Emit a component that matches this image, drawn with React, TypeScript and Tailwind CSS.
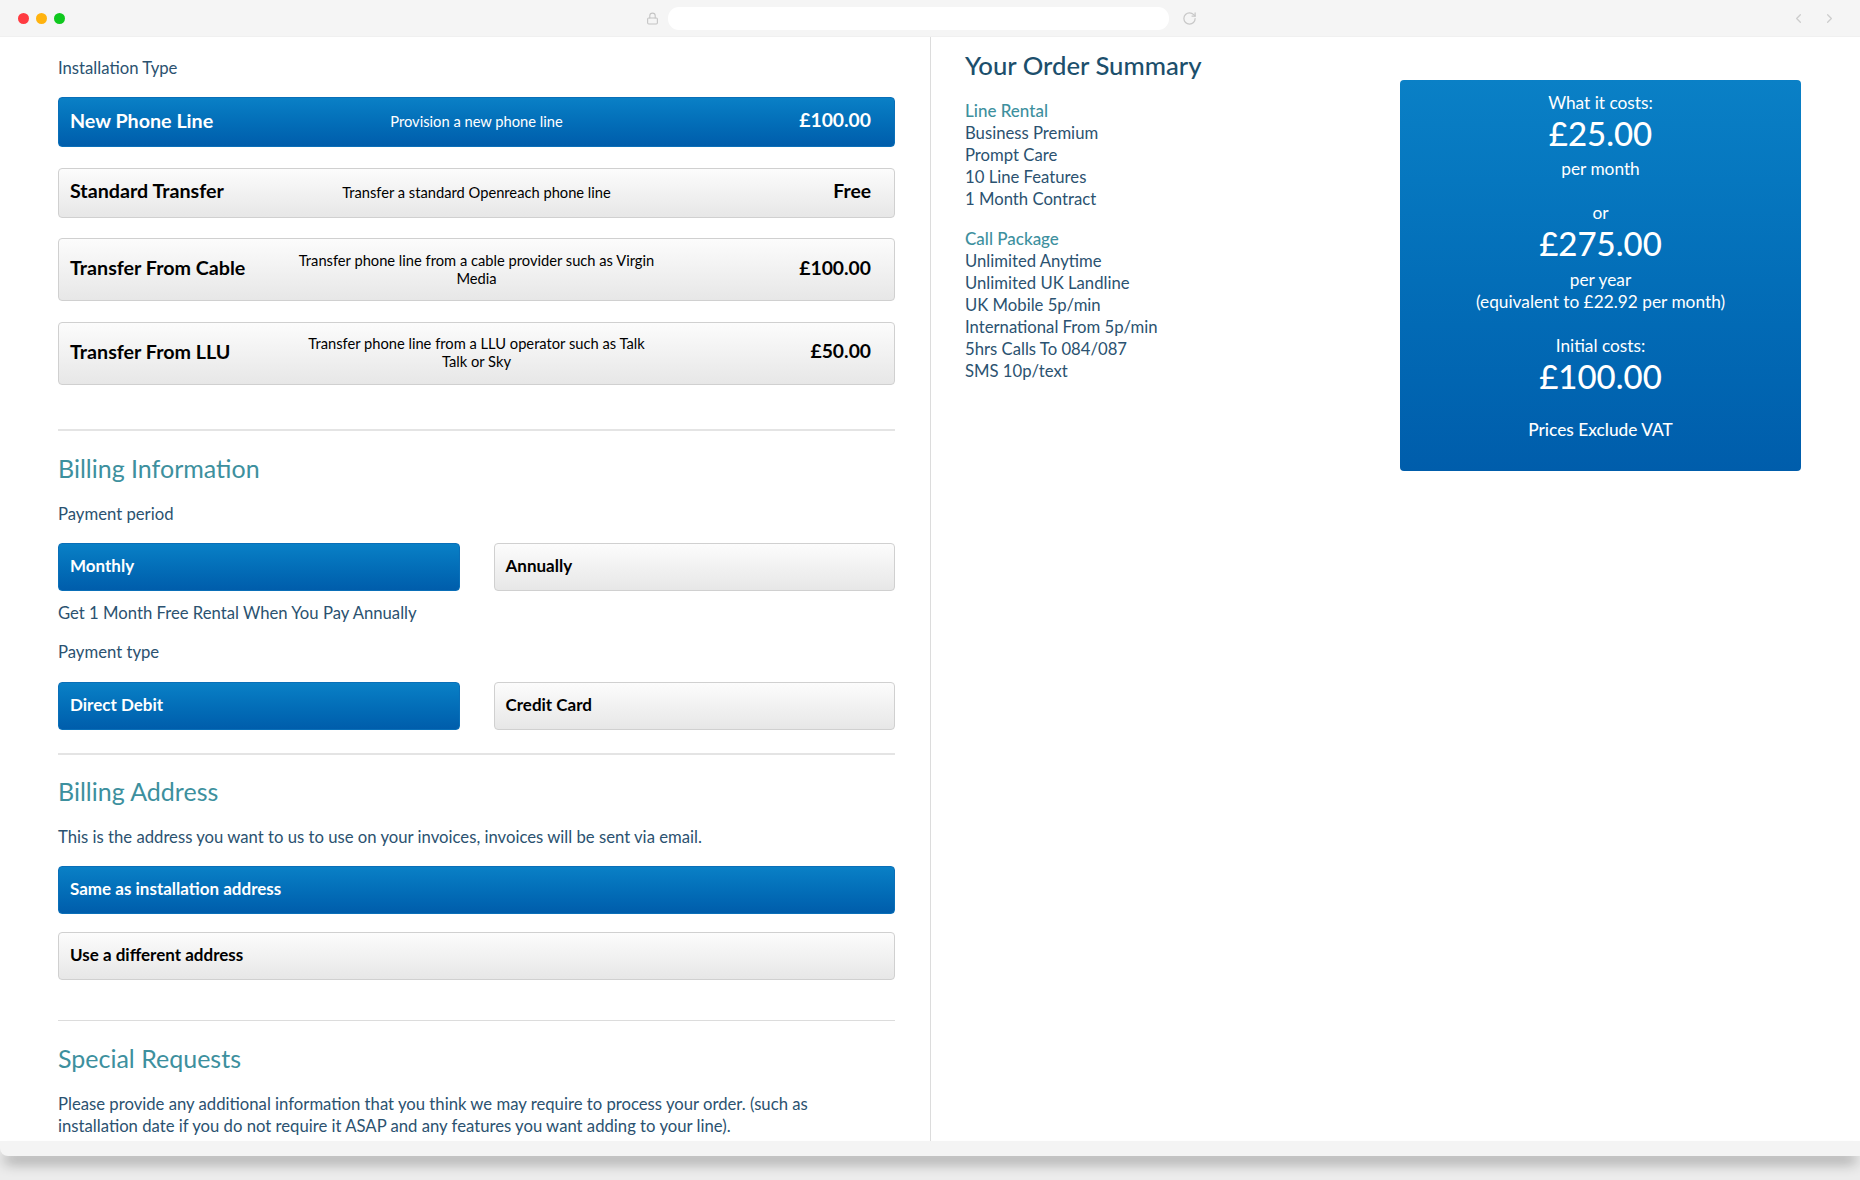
import { Lock, RotateCw, ChevronLeft, ChevronRight } from 'lucide-react';

const blue = 'bg-gradient-to-b from-[#0a80c6] to-[#005dab] text-white rounded-[4px] border border-[#0a6fb8]';
const grey = 'bg-gradient-to-b from-[#fcfcfc] to-[#e7e7e7] text-black rounded-[4px] border border-[#d0d0d0]';

const plans = [
  { name: 'New Phone Line', desc: ['Provision a new phone line'], price: '£100.00', active: true, h: 'h-[50px]' },
  { name: 'Standard Transfer', desc: ['Transfer a standard Openreach phone line'], price: 'Free', active: false, h: 'h-[50px]' },
  { name: 'Transfer From Cable', desc: ['Transfer phone line from a cable provider such as Virgin', 'Media'], price: '£100.00', active: false, h: 'h-[63px]' },
  { name: 'Transfer From LLU', desc: ['Transfer phone line from a LLU operator such as Talk', 'Talk or Sky'], price: '£50.00', active: false, h: 'h-[63px]' },
];

const lineRental = ['Business Premium', 'Prompt Care', '10 Line Features', '1 Month Contract'];
const callPackage = ['Unlimited Anytime', 'Unlimited UK Landline', 'UK Mobile 5p/min', 'International From 5p/min', '5hrs Calls To 084/087', 'SMS 10p/text'];

const Choice = ({ label, active }: { label: string; active?: boolean }) => (
  <div className={`h-[48px] flex items-center pl-[11px] pr-3 pb-[2px] text-[17px] font-bold ${active ? blue : grey}`}>{label}</div>
);

const Heading = ({ children, className }: { children: string; className: string }) => (
  <h2 className={`text-[25px] leading-[32px] text-[#3d909e] ${className}`}>{children}</h2>
);

const Text = ({ children, className = '' }: { children: string; className?: string }) => (
  <p className={`text-[16.7px] leading-[22px] text-[#2b5270] ${className}`}>{children}</p>
);

const Price = ({ children }: { children: string }) => (
  <div className="text-[33px] leading-[40px] font-medium">{children}</div>
);

export default function App() {
  return (
    <div className="w-[1860px] h-[1180px] overflow-hidden bg-[#ececec]" style={{ fontFamily: 'Lato, "Open Sans", sans-serif' }}>
      {/* Browser bar */}
      <div className="h-[37px] bg-[#f5f5f5] flex items-center relative border-b border-[#f0f0f0]">
        <div className="flex gap-[7px] ml-[18px]">
          <span className="w-[11px] h-[11px] rounded-full bg-[#ff3b41]" />
          <span className="w-[11px] h-[11px] rounded-full bg-[#ffb30f]" />
          <span className="w-[11px] h-[11px] rounded-full bg-[#0fc81e]" />
        </div>
        <Lock className="w-[13px] h-[13px] text-[#c4c4c4] ml-[581px]" />
        <div className="w-[501px] h-[23px] bg-white rounded-[11px] ml-[9px]" />
        <RotateCw className="w-[15px] h-[15px] text-[#c8c8c8] ml-[13px]" />
        <ChevronLeft className="w-[15px] h-[15px] text-[#cdcdcd] ml-[594px]" />
        <ChevronRight className="w-[15px] h-[15px] text-[#cdcdcd] ml-[16px]" />
      </div>

      {/* Page */}
      <div className="h-[1104px] bg-white flex overflow-hidden">
        <div className="w-[931px] shrink-0 border-r border-[#dcdcdc] pl-[58px] pr-[35px] pt-[20px]">
          <Text>Installation Type</Text>
          <div className="mt-[18px] flex flex-col gap-[20.5px]">
            {plans.map(p => (
              <div key={p.name} className={`${p.h} ${p.active ? blue : grey} flex items-center pl-[11px] pr-[23px] pb-[2px]`}>
                <div className="w-[190px] mb-[1px] text-[19.7px] font-bold whitespace-nowrap">{p.name}</div>
                <div className="flex-1 text-center text-[14.7px] leading-[18px]">
                  {p.desc.map(line => <div key={line}>{line}</div>)}
                </div>
                <div className="w-[178px] mb-[1px] text-right text-[19.3px] font-bold">{p.price}</div>
              </div>
            ))}
          </div>

          <hr className="mt-[44px] border-0 h-[2px] bg-[#e4e4e4]" />
          <Heading className="mt-[21px]">Billing Information</Heading>
          <Text className="mt-[19px]">Payment period</Text>
          <div className="mt-[18px] grid grid-cols-2 gap-[34px]">
            <Choice label="Monthly" active />
            <Choice label="Annually" />
          </div>
          <Text className="mt-[11px]">Get 1 Month Free Rental When You Pay Annually</Text>
          <Text className="mt-[17px]">Payment type</Text>
          <div className="mt-[19px] grid grid-cols-2 gap-[34px]">
            <Choice label="Direct Debit" active />
            <Choice label="Credit Card" />
          </div>

          <hr className="mt-[23px] border-0 h-[2px] bg-[#e4e4e4]" />
          <Heading className="mt-[20px]">Billing Address</Heading>
          <Text className="mt-[19px]">This is the address you want to us to use on your invoices, invoices will be sent via email.</Text>
          <div className="mt-[18px] grid gap-[18px]">
            <Choice label="Same as installation address" active />
            <Choice label="Use a different address" />
          </div>

          <hr className="mt-[40px] border-0 h-[1px] bg-[#dcdcdc]" />
          <Heading className="mt-[21px]">Special Requests</Heading>
          <Text className="mt-[19px] max-w-[825px]">Please provide any additional information that you think we may require to process your order. (such as installation date if you do not require it ASAP and any features you want adding to your line).</Text>
        </div>

        {/* Order summary */}
        <div className="flex-1 flex justify-between pl-[34px] pr-[59px]">
          <div className="pt-[12px]">
            <h1 className="text-[25.7px] leading-[32px] font-medium text-[#1c4f6c]">Your Order Summary</h1>
            <div className="mt-[19px]">
              <div className="text-[17px] leading-[22px] font-medium text-[#3d909e]">Line Rental</div>
              {lineRental.map(item => <Text key={item}>{item}</Text>)}
            </div>
            <div className="mt-[18px]">
              <div className="text-[17px] leading-[22px] font-medium text-[#3d909e]">Call Package</div>
              {callPackage.map(item => <Text key={item}>{item}</Text>)}
            </div>
          </div>
          <div className="mt-[43px] w-[401px] h-[391px] rounded-[4px] bg-gradient-to-b from-[#0a80c6] to-[#005dab] text-white text-center text-[17.3px] leading-[22px] pt-[12px]">
            <div>What it costs:</div>
            <div className="-mt-px"><Price>£25.00</Price></div>
            <div className="mt-[5px]">per month</div>
            <div className="mt-[22px]">or</div>
            <div className="-mt-px"><Price>£275.00</Price></div>
            <div className="mt-[6px]">per year</div>
            <div>(equivalent to £22.92 per month)</div>
            <div className="mt-[22px]">Initial costs:</div>
            <div className="-mt-px"><Price>£100.00</Price></div>
            <div className="mt-[23px] font-medium">Prices Exclude VAT</div>
          </div>
        </div>
      </div>

      {/* Window bottom edge */}
      <div className="h-[15px] bg-[#f4f4f4] rounded-bl-[8px] shadow-[0_10px_14px_-4px_rgba(0,0,0,0.45)]" />
    </div>
  );
}
